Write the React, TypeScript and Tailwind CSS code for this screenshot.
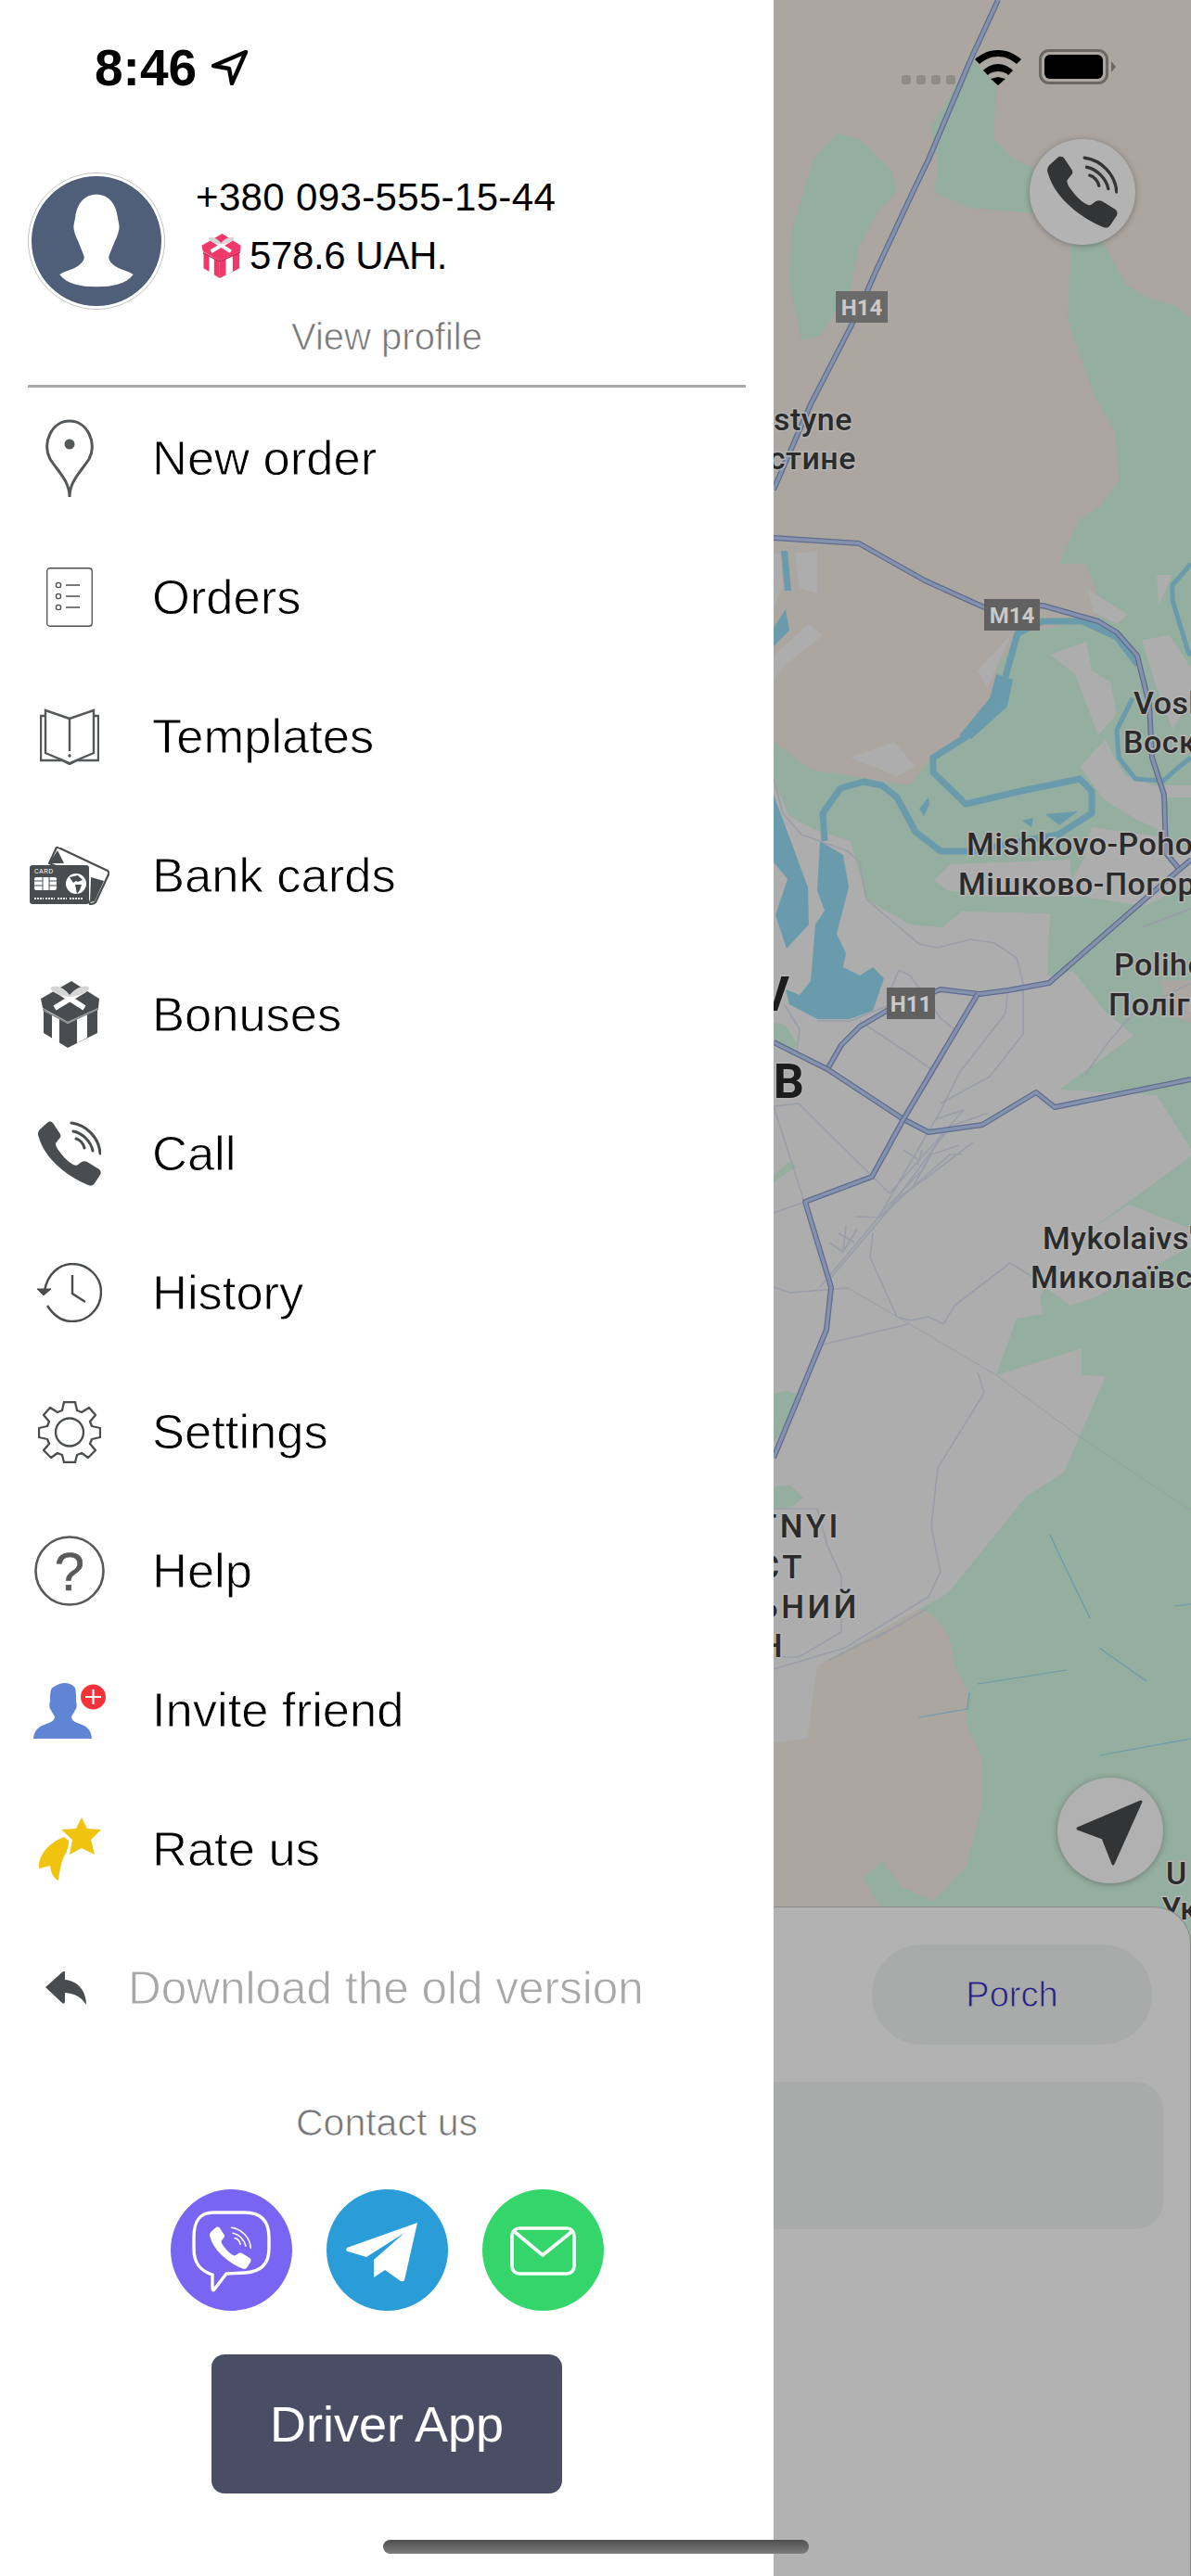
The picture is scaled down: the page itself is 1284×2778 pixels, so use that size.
import React from "react";

const PHONE = "M11 1 C13 0 15 1 16 2 L24 14 C25 17 24 18 22 20 L19 24 C19 26 20 28 21 30 C26 37 31 43 38 47 C40 48 42 48 43 47 L47 44 C49 43 51 43 53 44 L66 52 C68 54 68 56 67 58 L61 67 C59 70 57 70 54 69 C34 61 8 42 1 18 C-1 14 0 11 3 8 Z";

const PhoneIcon = ({ color = "#4a4d4f", className = "" }: { color?: string; className?: string }) => (
    <svg viewBox="0 0 68 70" className={className}>
        <path d={PHONE} fill={color} />
        <g fill="none" stroke={color} strokeWidth="3" strokeLinecap="round">
            <path d="M36 2 C52 4 66 18 67 35" />
            <path d="M38 11 C48 13 57 22 59 32" />
            <path d="M41 19 C45 20 49 24 50 29" />
        </g>
    </svg>
);

const GiftIcon = ({ body, dark, className = "" }: { body: string; dark: string; className?: string }) => (
    <svg viewBox="0 0 63 72" className={className}>
        {/* box sides */}
        <path d="M3 30 L29 46 L29 72 L3 56 Z" fill={body} />
        <path d="M61 30 L29 46 L29 72 L61 56 Z" fill={body} />
        <path d="M12 36 L20 41 L20 67 L12 62 Z" fill="#fff" />
        <path d="M39 41 L50 35 L50 61 L39 67 Z" fill="#fff" />
        {/* lid */}
        <path d="M33 0 L63 19 L62 29 L29 44 L2 29 L0 19 Z" fill={body} />
        <path d="M2 30 L29 44 L62 29 L62 31 L29 46 L2 32 Z" fill={dark} />
        <path d="M16 9 L47 29 M48 9 L15 29" stroke="#fff" strokeWidth="6" />
        {/* bow */}
        <path d="M31 15 C26 8 18 4 12 6 C8 9 16 16 31 17 C46 16 55 9 51 6 C45 4 37 8 31 15 Z" fill="#d6d6d6" />
    </svg>
);

const PinIcon = () => (
    <svg viewBox="0 0 56 87" className="w-[56px] h-[87px]">
        <path d="M28 85 C28 68 16 58 7 44 C-2 26 9 3 28 3 C47 3 58 26 49 44 C40 58 28 68 28 85 Z" fill="none" stroke="#55585a" strokeWidth="3" />
        <circle cx="28" cy="28" r="5.5" fill="#55585a" />
    </svg>
);

const OrdersIcon = () => (
    <svg viewBox="0 0 50 64" className="w-[50px] h-[64px]" fill="none" stroke="#4a4d4f">
        <rect x="0.75" y="0.75" width="48.5" height="62.5" rx="3" strokeWidth="1.3" />
        <circle cx="13" cy="19" r="2.6" strokeWidth="1.3" />
        <circle cx="13" cy="31" r="2.6" strokeWidth="1.3" />
        <circle cx="13" cy="43" r="2.6" strokeWidth="1.3" />
        <path d="M21 19 H36 M21 31 H36 M21 43 H36" strokeWidth="1.3" />
    </svg>
);

const BookIcon = () => (
    <svg viewBox="0 0 64 61" className="w-[64px] h-[61px]" fill="none" stroke="#55585a" strokeWidth="2.4">
        <path d="M32 11 L6 2 V48 L32 59 L58 48 V2 Z" />
        <path d="M6 8 H1 V56 H24 L32 60 L40 56 H63 V8 H58" />
        <path d="M32 11 V46" />
        <circle cx="32" cy="51" r="1.4" fill="#55585a" strokeWidth="0.6" />
    </svg>
);

const CardIcon = () => (
    <svg viewBox="0 0 86 63" className="w-[86px] h-[63px]">
        <path d="M31 1 L84 26 Q86 28 85 30 L71 60 Q69 62 65 62 L50 30 L21 18 L28 3 Q29 0 31 1 Z" fill="#fff" stroke="#4a4d4f" strokeWidth="2.2" strokeLinejoin="round" />
        <path d="M21 18 L30 4 L37 18 Z" fill="#4a4d4f" />
        <path d="M66 33 L80 37 L70 59 L65 60 Z" fill="#4a4d4f" />
        <rect x="0" y="20" width="64" height="42" rx="3" fill="#4a4d4f" />
        <text x="5" y="29" fill="#fff" fontSize="6.5" fontFamily="Liberation Sans, sans-serif" letterSpacing="0.6">CARD</text>
        <rect x="5" y="33" width="24" height="14" rx="2" fill="#fff" />
        <path d="M5 37 H14 M5 42 H14 M21 37 H29 M21 42 H29 M14 33 V47 M21 33 V47" stroke="#4a4d4f" strokeWidth="1" />
        <circle cx="50" cy="40" r="11" fill="#fff" />
        <path d="M43 33 L52 31 L57 36 L52 38 L50 37 L47 39 Z M49 41 L56 41 L54 47 L51 51 Z" fill="#4a4d4f" />
        <path d="M5 56 H15 M17 56 H27 M30 56 H40 M43 56 H57" stroke="#fff" strokeWidth="2" strokeDasharray="2 1" />
    </svg>
);

const HistoryIcon = () => (
    <svg viewBox="0 0 70 64" className="w-[70px] h-[64px]" fill="none" stroke="#4a4d4f" strokeWidth="2.4">
        <path d="M8 30 C11 12 24 1 38 1 C55 1 69 15 69 31 C69 49 55 63 38 63 C28 63 18 57 11 46" />
        <path d="M0 28 L15 28 L7 35 Z" fill="#4a4d4f" strokeWidth="1" />
        <path d="M38 13 V33 L52 42" />
    </svg>
);

const SettingsIcon = () => (
    <svg viewBox="0 0 68 67" className="w-[68px] h-[67px]" fill="none" stroke="#4a4d4f" strokeWidth="2.3" strokeLinejoin="round">
        <circle cx="34" cy="33.5" r="15" />
        <path d="M28 1 H40 L42 10 L47 12 L55 7 L62 15 L56 22 L58 27 L67 29 V39 L58 41 L56 46 L62 53 L54 61 L47 56 L42 58 L40 66 H28 L26 58 L21 56 L14 61 L6 53 L12 46 L10 41 L1 39 V29 L10 27 L12 22 L6 15 L13 7 L21 12 L26 10 Z" />
    </svg>
);

const HelpIcon = () => (
    <svg viewBox="0 0 76 76" className="w-[76px] h-[76px]">
        <circle cx="38" cy="38" r="36.5" fill="none" stroke="#58595b" strokeWidth="2.6" />
        <text x="38" y="59" textAnchor="middle" fontSize="58" fill="#58595b" stroke="#58595b" strokeWidth="0.6" fontFamily="Liberation Sans, sans-serif">?</text>
    </svg>
);

const InviteIcon = () => (
    <svg viewBox="0 0 78 62" className="w-[78px] h-[62px]">
        <path d="M0 62 C1 52 6 49 14 46 C20 44 23 42 23 38 C22 36 20 34 19 31 C17 30 17 24 18 22 C18 12 18 7 24 5 C30 1 38 1 43 5 C46 7 46 12 46 22 C47 24 47 30 45 31 C44 34 42 36 41 38 C41 42 44 44 50 46 C58 49 62 52 63 62 Z" fill="#6085d4" />
        <circle cx="64.5" cy="17" r="13.5" fill="#f2343a" />
        <path d="M64.5 9 V25 M56 17 H73" stroke="#fff" strokeWidth="2.2" />
    </svg>
);

const RateIcon = () => (
    <svg viewBox="0 0 68 69" className="w-[68px] h-[69px]" fill="#f0c30f">
        <path d="M47 0 L53 12 L68 13 L57 24 L61 40 L47 33 L34 40 L37 24 L25 13 L41 12 Z" />
        <path d="M28 21 L33 25 C33 32 31 34 31 37 C26 44 24 52 22 68 C17 66 14 60 13 52 L1 55 C0 42 10 28 28 21 Z" />
    </svg>
);

const BackIcon = () => (
    <svg viewBox="0 0 44 36" className="w-[44px] h-[36px]">
        <path d="M0 17 L19 0 Q21 -1 21 2 V9 C34 10 44 20 44 36 C38 27 32 24 21 23 V33 Q20 36 18 34 Z" fill="#484c4e" />
    </svg>
);

const menuItems: { label: string; icon: React.ReactNode }[] = [
    { label: "New order", icon: <PinIcon /> },
    { label: "Orders", icon: <OrdersIcon /> },
    { label: "Templates", icon: <BookIcon /> },
    { label: "Bank cards", icon: <CardIcon /> },
    { label: "Bonuses", icon: <GiftIcon body="#4a4d4f" dark="#8a8c8e" className="w-[63px] h-[72px]" /> },
    { label: "Call", icon: <PhoneIcon className="w-[68px] h-[70px]" /> },
    { label: "History", icon: <HistoryIcon /> },
    { label: "Settings", icon: <SettingsIcon /> },
    { label: "Help", icon: <HelpIcon /> },
    { label: "Invite friend", icon: <InviteIcon /> },
    { label: "Rate us", icon: <RateIcon /> },
];

const Profile = () => (
    <div className="px-[30px] h-[230px] flex flex-col">
        <div className="flex">
            <div className="w-[148px] h-[148px] rounded-full border-[1.5px] border-[#c4c4c4] p-[3px] shrink-0">
                <svg viewBox="0 0 148 148" className="w-full h-full">
                    <circle cx="74" cy="74" r="74" fill="#4f5f79" />
                    <path d="M74 21 C60 21 52 32 50 46 C49 52 48 55 48 58 C48 62 50 68 53 74 C56 82 59 88 60 92 C60 96 57 100 52 103 C45 107 38 108 32 112 C40 123 56 126 74 126 C92 126 108 123 116 112 C110 108 103 107 96 103 C91 100 88 96 88 92 C89 88 92 82 95 74 C98 68 100 62 100 58 C100 55 99 52 98 46 C96 32 88 21 74 21 Z" fill="#fff" />
                </svg>
            </div>
            <div className="ml-[33px] -mt-[5px] font-['Liberation_Sans',sans-serif] text-[42px] leading-[63px] text-black">
                <div className="tracking-[0.35px]">+380 093-555-15-44</div>
                <div className="flex items-center">
                    <GiftIcon body="#f0386b" dark="#c21f4e" className="w-[43px] h-[48px] ml-[6px] mr-[9px]" />
                    <span className="-tracking-[0.4px]">578.6 UAH.</span>
                </div>
            </div>
        </div>
        <div className="mt-[4px] text-center font-['Liberation_Sans',sans-serif] [-webkit-text-stroke:0.7px_white] text-[40px] leading-[50px] text-[#777777]">
            View profile
        </div>
    </div>
);

const Drawer = () => (
    <aside className="w-[834px] h-[2778px] bg-white flex flex-col shrink-0 relative">
        <div className="h-[186px] pl-[102px] pt-[41px] flex items-start">
            <span className="font-['Liberation_Sans',sans-serif] font-bold text-[55px] leading-[64px] text-black">8:46</span>
            <svg viewBox="0 0 40 38" className="w-[40px] h-[38px] ml-[16px] mt-[13px]">
                <path d="M37 2 L2 17 L19 20 L22 36 Z" fill="none" stroke="#000" strokeWidth="4.4" strokeLinejoin="round" />
            </svg>
        </div>
        <Profile />
        <div className="mx-[30px] h-[3px] bg-[#a9a9a9] -mt-[1px]" />
        <nav className="flex flex-col pt-[1px]">
            {menuItems.map((item) => (
                <div key={item.label} className="h-[150px] flex items-center">
                    <div className="w-[150px] flex justify-center shrink-0">{item.icon}</div>
                    <span className="ml-[14px] font-['Liberation_Sans',sans-serif] [-webkit-text-stroke:0.8px_white] text-[52.5px] text-black">{item.label}</span>
                </div>
            ))}
            <div className="h-[150px] flex items-center">
                <div className="w-[138px] flex justify-center pl-[4px] shrink-0"><BackIcon /></div>
                <span className="font-['Liberation_Sans',sans-serif] [-webkit-text-stroke:0.8px_white] text-[49.5px] text-[#a8a8a8]">Download the old version</span>
            </div>
        </nav>
        <div className="mt-[45px] text-center font-['Liberation_Sans',sans-serif] [-webkit-text-stroke:0.7px_white] text-[41px] leading-[50px] text-[#777777]">Contact us</div>
        <div className="mt-[47px] flex justify-center gap-[37px]">
            <div className="w-[131px] h-[131px] rounded-full bg-[#7866f2]">
                <svg viewBox="0 0 131 131" className="w-full h-full">
                    <path d="M46 25 H80 C97 25 106 34 106 52 V64 C106 81 97 89 80 90 L60 91 L47 108 Q45 110 45 106 V92 C32 88 25 80 25 64 V52 C25 34 31 25 46 25 Z" fill="none" stroke="#fff" strokeWidth="3.4" strokeLinejoin="round" />
                    <g transform="translate(42 40) scale(0.66)">
                        <path d={PHONE} fill="#fff" />
                        <g fill="none" stroke="#fff" strokeWidth="2.4" strokeLinecap="round">
                            <path d="M36 2 C52 4 66 18 67 35" />
                            <path d="M38 11 C48 13 57 22 59 32" />
                            <path d="M41 19 C45 20 49 24 50 29" />
                        </g>
                    </g>
                </svg>
            </div>
            <div className="w-[131px] h-[131px] rounded-full bg-[#2a9cd8]">
                <svg viewBox="0 0 131 131" className="w-full h-full">
                    <path d="M98 36 L22 63 Q20 66 23 67 L43 73 L84 47 L51 76 L51 95 L63 87 L80 99 Q83 100 84 98 Z" fill="#fff" />
                </svg>
            </div>
            <div className="w-[131px] h-[131px] rounded-full bg-[#34d66c]">
                <svg viewBox="0 0 131 131" className="w-full h-full" fill="none" stroke="#fff" strokeWidth="3.6">
                    <rect x="32" y="42" width="67" height="49" rx="8" />
                    <path d="M35 46 L65 71 L96 46" strokeLinejoin="round" />
                </svg>
            </div>
        </div>
        <div className="mt-[47px] mx-auto w-[378px] h-[150px] rounded-[14px] bg-[#494e65] flex items-center justify-center font-['Liberation_Sans',sans-serif] text-[54px] text-white">
            Driver App
        </div>
    </aside>
);

const minorRoads = [
    "M0 1193 L27 1190 L125 1287 L205 1197 L175 1207",
    "M252 1072 L250 1093 L200 1157 L180 1198",
    "M0 840 L10 877 L30 900 L80 918 L93 930 L100 970 L157 1018 L177 1022 L212 1013 L238 1017 L262 1033 L269 1060 L269 1115 L233 1161 L180 1190",
    "M50 1388 L113 1313 L180 1198",
    "M60 1380 L122 1307 L190 1215 L232 1200",
    "M107 1330 L104 1356 L133 1420 L147 1424 L167 1420 L183 1428 L195 1408 L255 1362 L287 1382",
    "M53 1450 L145 1428",
    "M220 1480 L227 1502 L177 1583 L170 1646 L180 1695 L167 1722 L77 1777 L0 1800",
    "M0 1388 L18 1394 L80 1389",
    "M0 1308 L34 1296",
    "M0 1193 L33 1296",
    "M0 1627 L47 1627 L58 1667 L73 1700 L73 1760 L27 1787 L0 1787",
    "M135 1046 L147 1052 L180 1098 L195 1110",
    "M122 1078 L135 1046",
    "M93 1101 L153 1141 L170 1153",
    "M12 1084 L28 1110 L25 1135",
    "M47 1101 L83 1101 L122 1085",
    "M60 1340 L75 1350 L90 1325 M75 1350 L78 1322 M70 1330 L88 1340",
    "M160 1240 L155 1256 M140 1240 L155 1250 M113 1313 L190 1245 L203 1245",
    "M116 1312 L150 1280 L170 1245 L200 1235 M120 1304 L160 1262 L180 1225 M125 1298 L165 1270 L215 1232 M88 1312 L115 1313",
    "M397 1000 L450 980",
    "M335 1160 L360 1125 L390 1090 L450 1060",
    "M110 1767 L165 1735 M60 1790 L120 1760",
];

const MapView = () => (
    <div className="h-[2056px] relative">
        <svg viewBox="0 0 450 2100" className="w-[450px] h-[2100px] block" fontFamily="Roboto, sans-serif">
            <rect width="450" height="2100" fill="#aba69f" />
            {/* forest */}
            <g fill="#94ae9f">
                <path d="M68 144 L93 150 L127 184 L132 207 L113 227 L92 267 L82 313 L50 362 L30 367 L17 304 L20 247 L43 172 Z" />
                <path d="M213 63 L240 92 L237 149 L260 172 L280 181 L280 230 L210 224 L173 207 L177 178 L170 138 Z" />
                <path d="M320 264 L353 258 L380 307 L403 321 L433 330 L450 344 L450 2100 L0 2100 L0 800 L40 830 L147 847 L170 817 L207 790 L233 760 L242 717 L267 683 L350 667 L348 637 L337 608 L308 608 L330 560 L353 545 L373 517 L368 465 L345 425 L317 344 Z" />
            </g>
            {/* town areas */}
            <g fill="#adadad">
                <path d="M23 597 L47 594 L47 640 L28 634 Z" />
                <path d="M0 597 L8 597 L10 632 L0 657 Z" />
                <path d="M37 673 L53 685 L13 717 L0 733 L0 707 Z" />
                <path d="M338 635 L382 663 L370 673 L345 660 Z" />
                <path d="M298 706 L337 692 L343 723 L363 735 L370 770 L350 793 L325 727 Z" />
                <path d="M397 690 L427 685 L450 720 L450 753 L430 787 L410 733 Z" />
                <path d="M330 827 L358 797 L367 817 L380 837 L410 847 L450 847 L450 860 L420 860 L420 897 L390 883 L357 863 Z" />
                <path d="M413 620 L430 620 L415 653 Z" />
                <path d="M173 950 L190 932 L320 927 L321 950 L335 925 L343 892 L423 903 L450 920 L450 953 L400 977 L333 967 L233 967 L187 960 Z" />
                <path d="M83 817 L130 800 L153 827 L133 837 Z" />
                <path d="M220 723 L257 683 L230 742 Z" />
                <path d="M0 840 L17 880 L45 895 L83 907 L100 970 L147 997 L182 1000 L203 983 L298 985 L295 1053 L323 1047 L355 1088 L388 1117 L308 1175 L413 1181 L450 1239 L450 1247 L343 1325 L383 1299 L450 1325 L450 1345 L433 1353 L347 1399 L320 1408 L293 1388 L287 1399 L290 1417 L262 1422 L240 1483 L332 1454 L332 1483 L358 1484 L313 1588 L273 1613 L188 1718 L157 1735 L47 1797 L37 1875 L0 1880 Z" />
                <path d="M417 1057 L450 1057 L450 1103 L425 1095 Z" fill="#aba69f" />
            </g>
            {/* small clearings on top of the town */}
            <g fill="#94ae9f">
                <path d="M0 1267 L17 1253 L25 1258 L0 1275 Z" />
                <path d="M0 1503 L13 1500 L25 1503 L10 1546 L0 1554 Z" />
                <path d="M0 1603 L18 1602 L32 1615 L20 1625 L0 1627 Z" />
                <path d="M0 1103 L12 1105 L25 1125 L20 1140 L0 1120 Z" />
            </g>
            <path d="M157 1735 L170 1740 L188 1762 L198 1803 L210 1825 L207 1857 L225 1897 L226 1940 L208 2013 L172 2050 L138 2035 L117 2007 L97 2025 L115 2056 L115 2100 L0 2100 L0 1880 L37 1875 L47 1797 Z" fill="#aba69f" />
            {/* water */}
            <g fill="#6a9bad">
                <path d="M0 857 L37 957 L38 997 L14 1023 L2 987 L15 948 L0 930 Z" />
                <path d="M50 907 L75 922 L81 957 L68 1007 L78 1028 L75 1043 L93 1052 L107 1043 L119 1055 L107 1090 L82 1099 L47 1099 L17 1083 L13 1067 L28 1073 L40 1058 L45 997 L55 982 L47 960 Z" />
                <path d="M233 753 L240 727 L258 733 L252 762 L213 797 L200 793 Z" />
                <path d="M157 872 L167 860 L168 868 L162 880 Z" />
                <path d="M293 878 L328 875 L308 890 Z" />
                <path d="M268 885 L280 882 L278 892 Z" />
                <path d="M8 594 L15 594 L19 637 L12 637 Z" />
                <path d="M13 657 L17 680 L0 697 L0 677 Z" />
            </g>
            <g fill="none" stroke="#6a9bad" strokeLinejoin="round">
                <path d="M55 907 L53 877 L72 850 L97 843 L117 847 L133 860 L153 897 L180 918 L217 918 L267 907 L307 900 L343 877 L343 853 L330 840 L267 853 L207 867 L172 833 L172 817 L207 795 L233 763 L250 730 L263 683 L290 670 L333 670 L370 687 L393 717" strokeWidth="7" />
                <path d="M387 753 L370 787 L372 817 L390 840 L420 842 L437 827 L450 817" strokeWidth="5" />
                <path d="M450 608 L430 631 L430 647 L447 703 L450 707" strokeWidth="5" />
                <path d="M298 1655 L312 1685 L341 1745" strokeWidth="1.2" />
                <path d="M220 1816 L316 1801 M157 1852 L209 1843 L211 1825 M352 1893 L450 1875 M433 1732 L450 1730 M351 1777 L402 1813" strokeWidth="1.2" />
            </g>
            {/* minor roads */}
            <g fill="none" stroke="#9a9ea8" strokeWidth="1.6" strokeLinejoin="round">
                {minorRoads.map((d) => <path key={d} d={d} />)}
                <path d="M80 1389 L147 1428 L240 1483 L325 1546 L450 1629" strokeWidth="1" />
            </g>
            {/* highways */}
            {[
                "M242 0 L213 63 L167 172 L153 201 L110 293 L90 339 L40 436 L0 528",
                "M0 580 L92 586 L163 626 L227 655 L290 653 L350 670 L370 682 L392 707 L405 760 L408 817 L421 857 L423 920 L437 937",
                "M450 927 L400 970 L297 1060 L253 1068 L222 1072 L180 1067 L122 1090 L93 1107 L73 1127 L58 1153",
                "M0 1124 L58 1153 L140 1207 L167 1221 L225 1213 L283 1178 L303 1194 L450 1164",
                "M220 1072 L140 1207 L106 1269 L34 1296 L62 1388 L57 1434 L0 1572",
            ].map((d) => (
                <g key={d} fill="none" strokeLinejoin="round">
                    <path d={d} stroke="#5f6d90" strokeWidth="6" />
                    <path d={d} stroke="#8592ad" strokeWidth="3.4" />
                </g>
            ))}
            {/* shields */}
            <g fontWeight="700" fontSize="24" fill="#c9c9c9" textAnchor="middle">
                <rect x="67" y="314" width="56" height="34" fill="#6a6a6a" />
                <text x="95" y="340">H14</text>
                <rect x="227" y="646" width="60" height="34" fill="#616161" />
                <text x="257" y="672">M14</text>
                <rect x="122" y="1065" width="52" height="34" fill="#616161" />
                <text x="148" y="1091">H11</text>
            </g>
            {/* labels */}
            <g fill="#2b2b2b" stroke="#b4b4b4" strokeWidth="3" fontSize="34" fontWeight="500" letterSpacing="0.5" style={{ paintOrder: "stroke" }}>
                <text x="85" y="464" textAnchor="end">styne</text>
                <text x="89" y="506" textAnchor="end">стине</text>
                <text x="388" y="770">Vosh</text>
                <text x="377" y="812">Воск</text>
                <text x="208" y="922">Mishkovo-Poho</text>
                <text x="199" y="965">Мішково-Погор</text>
                <text x="367" y="1052">Poliho</text>
                <text x="361" y="1095">Поліго</text>
                <text x="290" y="1347">Mykolaivs'</text>
                <text x="277" y="1389">Миколаївс</text>
                <text x="423" y="2032">U</text>
                <text x="418" y="2070">Ук</text>
                <g fontSize="35" letterSpacing="3.5">
                    <text x="73" y="1658" textAnchor="end">TNYI</text>
                    <text x="34" y="1702" textAnchor="end">CT</text>
                    <text x="93" y="1745" textAnchor="end">ЬНИЙ</text>
                    <text x="13" y="1787" textAnchor="end">Н</text>
                </g>
                <g fontSize="52" fontWeight="700" fill="#1c1c1c" letterSpacing="0">
                    <text x="17" y="1090" textAnchor="end">V</text>
                    <text x="33" y="1184" textAnchor="end">В</text>
                </g>
            </g>
        </svg>

        {/* status bar */}
        <div className="absolute left-[138px] top-[81px] flex gap-[6px]">
            {[0, 1, 2, 3].map((i) => <div key={i} className="w-[10px] h-[10px] rounded-[3px] bg-[#8f8b85]" />)}
        </div>
        <svg viewBox="0 0 50 38" className="absolute left-[217px] top-[54px] w-[50px] h-[38px]">
            <path d="M25 29 L33 31 L25 38 L17 31 Z M25 15 C31 15 37 18 41 22 L36 27 C33 24 29 23 25 23 C21 23 17 24 14 27 L9 22 C13 18 19 15 25 15 Z M25 0 C35 0 43 4 50 10 L45 15 C39 10 33 7 25 7 C17 7 11 10 5 15 L0 10 C7 4 15 0 25 0 Z" fill="#000" />
        </svg>
        <div className="absolute left-[286px] top-[53px] flex items-center">
            <div className="w-[75px] h-[38px] rounded-[11px] border-[3px] border-[#6b6862] p-[3px]">
                <div className="w-full h-full rounded-[6px] bg-black" />
            </div>
            <div className="ml-[3px] w-0 h-0 border-y-[6px] border-y-transparent border-l-[5px] border-l-[#6b6862]" />
        </div>

        {/* floating buttons */}
        <div className="absolute left-[276px] top-[150px] w-[114px] h-[114px] rounded-full bg-[#b3b3b3] shadow-[0_1px_6px_rgba(60,60,60,0.45)] flex items-center justify-center">
            <PhoneIcon color="#333436" className="w-[76px] h-[78px]" />
        </div>
        <div className="absolute left-[306px] top-[1917px] w-[114px] h-[114px] rounded-full bg-[#b1b1b1] shadow-[0_1px_6px_rgba(60,60,60,0.45)]">
            <svg viewBox="0 0 114 114" className="w-full h-full">
                <path d="M90 26 L22 55 L49 65 L60 93 Z" fill="#333436" stroke="#333436" strokeWidth="3" strokeLinejoin="round" />
            </svg>
        </div>
    </div>
);

const BottomPanel = () => (
    <div className="relative h-[722px] bg-[#b2b2b2] border-t border-r border-[#8a8a8a] rounded-tr-[40px] pt-[40px]">
        <div className="ml-[106px] w-[302px] h-[108px] rounded-full bg-[#a9abaa] flex items-center justify-center font-['Liberation_Sans',sans-serif] [-webkit-text-stroke:0.9px_#a9abaa] text-[38px] text-[#231f86]">
            Porch
        </div>
        <div className="mt-[40px] w-[420px] h-[159px] rounded-r-[30px] bg-[#a9abaa]" />
    </div>
);

export default function App() {
    return (
        <div className="w-[1284px] h-[2778px] flex overflow-hidden relative bg-[#b2b2b2]">
            <Drawer />
            <div className="flex-1 flex flex-col">
                <MapView />
                <BottomPanel />
            </div>
            {/* home indicator sits on top of drawer and panel */}
            <div className="absolute left-[413px] top-[2739px] w-[459px] h-[15px] rounded-full bg-gradient-to-b from-[#4f4f4f] to-[#7c7c7c]" />
        </div>
    );
}
